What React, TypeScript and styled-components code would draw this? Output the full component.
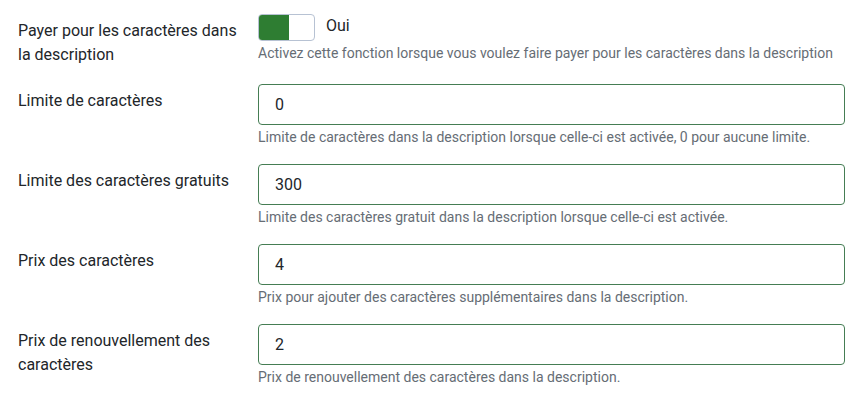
import React from "react";
import styled, { createGlobalStyle } from "styled-components";

const GlobalStyle = createGlobalStyle`
  body {
    margin: 0;
    background: #ffffff;
    font-family: Roboto, "Noto Sans", "Liberation Sans", sans-serif;
    color: #22262a;
  }
`;

const Form = styled.div`
  padding: 14px 8px 0 18px;
`;

const Row = styled.div<{ $first?: boolean }>`
  display: flex;
  align-items: flex-start;
  margin-bottom: ${(p) => (p.$first ? "17px" : "16px")};
`;

const Label = styled.label`
  flex: 0 0 240px;
  box-sizing: border-box;
  padding: 5px 12px 0 0;
  font-size: 16px;
  line-height: 24px;
  color: #22262a;
`;

const Controls = styled.div`
  flex: 1;
  display: flex;
  flex-direction: column;
`;

const SwitchRow = styled.div`
  display: flex;
  align-items: center;
  gap: 11px;
`;

const Switch = styled.div`
  box-sizing: border-box;
  width: 57px;
  height: 27px;
  border: 1px solid #b7c2d3;
  border-radius: 4px;
  overflow: hidden;
  display: flex;
`;

const SwitchKnob = styled.span<{ $on: boolean }>`
  width: 30px;
  height: 100%;
  background: ${(p) => (p.$on ? "#2e7d32" : "#ffffff")};
  margin-left: ${(p) => (p.$on ? "0" : "auto")};
`;

const SwitchText = styled.span`
  font-size: 16px;
  line-height: 24px;
  margin-top: -4px;
`;

const Input = styled.input`
  box-sizing: border-box;
  width: 587px;
  height: 41px;
  border: 1px solid #457d54;
  border-radius: 4px;
  padding: 0 16px;
  font-family: inherit;
  font-size: 16px;
  color: #22262a;
  background: #ffffff;
  outline: none;
`;

const Help = styled.small`
  display: block;
  margin-top: 2px;
  font-size: 14px;
  line-height: 21px;
  color: #666d75;
`;

const fields = [
  {
    label: "Limite de caractères",
    value: "0",
    help: "Limite de caractères dans la description lorsque celle-ci est activée, 0 pour aucune limite.",
  },
  {
    label: "Limite des caractères gratuits",
    value: "300",
    help: "Limite des caractères gratuit dans la description lorsque celle-ci est activée.",
  },
  {
    label: "Prix des caractères",
    value: "4",
    help: "Prix pour ajouter des caractères supplémentaires dans la description.",
  },
  {
    label: "Prix de renouvellement des caractères",
    value: "2",
    help: "Prix de renouvellement des caractères dans la description.",
  },
];

export default function App() {
  return (
    <>
      <GlobalStyle />
      <Form>
        <Row $first>
          <Label>Payer pour les caractères dans la description</Label>
          <Controls>
            <SwitchRow>
              <Switch>
                <SwitchKnob $on />
              </Switch>
              <SwitchText>Oui</SwitchText>
            </SwitchRow>
            <Help>
              Activez cette fonction lorsque vous voulez faire payer pour les caractères dans la description
            </Help>
          </Controls>
        </Row>
        {fields.map((f) => (
          <Row key={f.label}>
            <Label>{f.label}</Label>
            <Controls>
              <Input defaultValue={f.value} />
              <Help>{f.help}</Help>
            </Controls>
          </Row>
        ))}
      </Form>
    </>
  );
}
